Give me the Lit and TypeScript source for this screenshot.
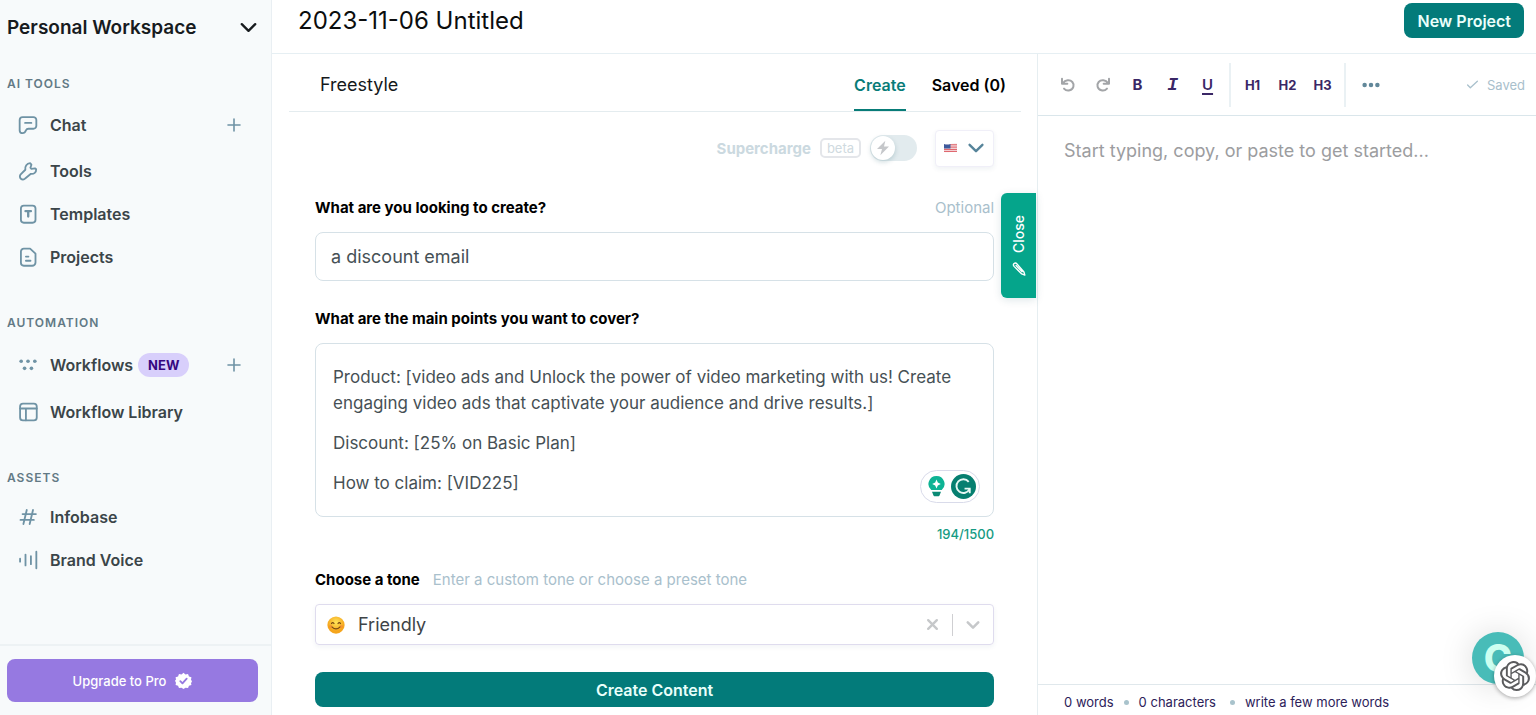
import { LitElement, html, css, svg, nothing, type TemplateResult } from "lit";
import { customElement, property } from "lit/decorators.js";

const ICONS: Record<string, TemplateResult> = {
  chevron: svg`<path d="M5 8.500l7 7 7-7"/>`,
  chat: svg`<path d="M5.500 2.500h13a3.500 3.500 0 0 1 3.500 3.500v7a3.500 3.500 0 0 1-3.500 3.500h-6c-1.600 0-2.400.7-3 2-.8 2-1.900 3.300-3.800 3.300-2.200 0-3.700-1.400-3.700-3.300v-12.500a3.500 3.500 0 0 1 3.500-3.500zM8.500 9.500h7.500"/>`,
  wrench: svg`<path d="M14.500 2.500l1.600 1.900-1.200 3.700 1.200 1.400 4.200-.7 1.500 1.200c.2 3.500-2.600 5.900-6.300 5.400L8.600 21a3.600 3.600 0 0 1-5.400-4.900l5.600-5.600C8 6.300 10.700 2.800 14.500 2.500z"/>`,
  template: svg`<rect x="3.500" y="2" width="17.500" height="20.500" rx="3.500"/><path d="M9 8.500h6.500M12.250 8.500v6.500" stroke-width="2.800"/>`,
  doc: svg`<path d="M7 2h7.500L21 8v10.500a4 4 0 0 1-4 4H7a3.500 3.500 0 0 1-3.500-3.500V5.500A3.500 3.500 0 0 1 7 2zM9.500 11.500h3M9.500 16.500h5.500"/>`,
  dots: svg`<g fill="currentColor" stroke="none"><circle cx="3.800" cy="7.500" r="2.200"/><circle cx="12" cy="7.500" r="2.200"/><circle cx="20.200" cy="7.500" r="2.200"/><circle cx="7.900" cy="16" r="2.200"/><circle cx="16.100" cy="16" r="2.200"/></g>`,
  layout: svg`<rect x="2.500" y="2" width="20" height="20" rx="3.500"/><path d="M2.500 7.800h20M9.500 7.800V22"/>`,
  hash: svg`<path d="M10.500 3.500L6.500 20.500M18 3.500l-4 17M5.500 8.500h16M3 15.500h16"/>`,
  wave: svg`<path d="M2.500 10.500v3.500M9 5.500v13M15.500 7.500v9.500M22 2v20"/>`,
  plus: svg`<path d="M12 3v18M3 12h18"/>`,
  check: svg`<path d="M3 13l5 5L21 6"/>`,
  undo: svg`<path d="M3 2.500v7.500h8M4 9.500C8 4 15 3.500 18.500 7.500c3.500 4 2 11-4 12.500-3.500.8-6.500-.3-8.500-2.500"/>`,
  redo: svg`<path d="M21 2.500v7.500h-8M20 9.500C16 4 9 3.500 5.500 7.500c-3.500 4-2 11 4 12.500 3.500.8 6.500-.3 8.500-2.500"/>`,
  more: svg`<g fill="currentColor" stroke="none"><circle cx="3.500" cy="12" r="3"/><circle cx="12" cy="12" r="3"/><circle cx="20.500" cy="12" r="3"/></g>`,
  close: svg`<path d="M4 4l16 16M20 4L4 20"/>`,
  bolt: svg`<path d="M15.500 1L3 13.500h7.500L8 23 21 9.800h-7.500z" fill="currentColor" stroke="none"/>`,
  pencil: svg`<path d="M3.500 2.500c2-1.500 4-.5 5 .7L20.500 17l1.500 5.500-5.300-2L3.500 7.500C2.300 6 2.300 3.700 3.500 2.500zM7 6l10 10.500"/>`,
};

function icon(name: string, size: number, stroke = 2) {
  return html`<svg width=${size} height=${size} viewBox="0 0 24 24" fill="none" stroke="currentColor"
    stroke-width=${stroke} stroke-linecap="round" stroke-linejoin="round" aria-hidden="true">${ICONS[name]}</svg>`;
}

const base = css`
  * { box-sizing: border-box; }
  svg { display: block; flex: none; }
  button, input, select, textarea { font: inherit; color: inherit; margin: 0; padding: 0; border: 0; background: none; }
  button { cursor: pointer; }
  h1, h2, p, ul { margin: 0; padding: 0; font-size: inherit; font-weight: inherit; }
  ul { list-style: none; }
`;

interface NavItem { label: string; icon: string; badge?: string; add?: boolean; }
interface NavGroup { title: string; items: NavItem[]; }

const NAV: NavGroup[] = [
  { title: "AI TOOLS", items: [
    { label: "Chat", icon: "chat", add: true },
    { label: "Tools", icon: "wrench" },
    { label: "Templates", icon: "template" },
    { label: "Projects", icon: "doc" },
  ] },
  { title: "AUTOMATION", items: [
    { label: "Workflows", icon: "dots", badge: "NEW", add: true },
    { label: "Workflow Library", icon: "layout" },
  ] },
  { title: "ASSETS", items: [
    { label: "Infobase", icon: "hash" },
    { label: "Brand Voice", icon: "wave" },
  ] },
];

@customElement("app-sidebar")
class AppSidebar extends LitElement {
  @property({ attribute: false }) groups: NavGroup[] = NAV;

  static styles = [base, css`
    :host { display: flex; flex-direction: column; background: #f7fafb; border-right: 1px solid #e9eff3; min-height: 0; }
    .workspace { display: flex; align-items: center; justify-content: space-between; height: 54px; padding: 0 11px 0 7px;
      font-size: 19px; font-weight: 600; color: #171b1e; text-align: left; }
    .nav { flex: 1; min-height: 0; overflow: hidden; display: flex; flex-direction: column; gap: 35px; padding-top: 20px; }
    .group { display: flex; flex-direction: column; gap: 7px; }
    .heading { padding-left: 7px; font-size: 12px; line-height: 20px; font-weight: 600; letter-spacing: 1px; color: #627985; }
    .row { display: flex; align-items: center; height: 43px; padding: 0 29px 0 18px; }
    .row.action { height: 48px; }
    .row.badged { height: 50px; }
    .link { display: flex; align-items: center; gap: 12px; flex: 1; font-size: 16px; font-weight: 600; color: #3b4549; text-decoration: none; }
    .link svg, .add { color: #6f93a5; }
    .badge { margin-left: -7px; padding: 0 10px; border-radius: 12px; background: #d8cffb; color: #36077f; font-size: 13px; line-height: 24px; font-weight: 700; }
    .foot { border-top: 2px solid #edf2f4; padding: 13px 13px 13px 7px; }
    .upgrade { display: flex; align-items: center; justify-content: center; gap: 9px; width: 100%; height: 43px; border-radius: 8px;
      background: #9679e1; color: #fff; font-size: 13px; font-weight: 500; }
  `];

  render() {
    return html`
      <button class="workspace">Personal Workspace ${icon("chevron", 23, 2.4)}</button>
      <nav class="nav">
        ${this.groups.map((g) => html`
          <section class="group">
            <h2 class="heading">${g.title}</h2>
            <ul>
              ${g.items.map((i) => html`
                <li class="row ${i.badge ? "badged" : i.add ? "action" : ""}">
                  <a class="link" href="#">${icon(i.icon, 20, 2.2)}<span>${i.label}</span>
                    ${i.badge ? html`<span class="badge">${i.badge}</span>` : nothing}</a>
                  ${i.add ? html`<button class="add" aria-label="Add to ${i.label}">${icon("plus", 16, 2.4)}</button>` : nothing}
                </li>`)}
            </ul>
          </section>`)}
      </nav>
      <div class="foot">
        <button class="upgrade">Upgrade to Pro
          <svg width="17" height="17" viewBox="0 0 24 24" aria-hidden="true">
            <path fill="#fff" d="M12 1l2.800 2.400 3.600-.6 1.300 3.400 3.500 1.300-.6 3.600L24 13l-1.400 3 .6 2.200-3.500 1.300-1.300 3.200-3.600-.3L12 24l-2.800-1.600-3.600.3-1.300-3.200-3.500-1.300.6-3.200L0 12.500l1.400-1.800-.6-3.200 3.500-1.300 1.300-3.400 3.600.6z"/>
            <path fill="none" stroke="#9679e1" stroke-width="2.600" stroke-linecap="round" stroke-linejoin="round" d="M7.500 13l3 3 6-6.500"/>
          </svg>
        </button>
      </div>`;
  }
}

@customElement("content-form")
class ContentForm extends LitElement {
  static styles = [base, css`
    :host { display: block; position: relative; min-width: 0; border-right: 1px solid #e6eef1; }
    .tabs { display: flex; align-items: stretch; gap: 26px; height: 58px; margin: 0 16px 0 17px; padding: 0 15px 0 31px;
      border-bottom: 1px solid #e4ecef; font-size: 16px; }
    .name { flex: 1; align-self: center; font-size: 18px; color: #15191b; padding-top: 4px; }
    .tab { display: flex; align-items: center; padding-top: 6px; border-bottom: 2px solid transparent; font-weight: 600; color: #000; }
    .tab.on { color: #087c78; border-color: #087c78; }
    .form { padding: 18px 43px 0; display: flex; flex-direction: column; }
    .options { display: flex; align-items: center; justify-content: flex-end; height: 36px; gap: 9px; margin-bottom: 30px; }
    .super { font-size: 15px; font-weight: 700; color: #cbd9e0; }
    .beta { padding: 0 5px; border: 2px solid #e4e6ea; border-radius: 5px; font-size: 13px; line-height: 16px; color: #cfdae0; }
    .switch { position: relative; display: block; width: 47px; height: 26px; }
    .switch input { appearance: none; display: block; width: 47px; height: 26px; border-radius: 13px; background: #e2ebee; }
    .knob { position: absolute; left: 1px; top: 1px; width: 24px; height: 24px; border-radius: 50%; background: #fff; color: #c5c7ca;
      display: grid; place-items: center; box-shadow: 0 2px 5px #0a4a5a33; pointer-events: none; }
    .lang { position: relative; display: flex; align-items: center; gap: 8px; width: 59px; height: 37px; margin-left: 9px; padding: 0 8px;
      border: 1px solid #f0eff8; border-radius: 4px; background: #fff; box-shadow: 0 2px 5px #22406012; color: #56849a; }
    .lang select { position: absolute; inset: 0; width: 100%; opacity: 0; }
    .label { display: flex; justify-content: space-between; margin-bottom: 12px; font-size: 15px; line-height: 24px; font-weight: 700; color: #000; }
    .hint { font-size: 15px; font-weight: 400; color: #a9c0cc; }
    .input { width: 100%; height: 49px; margin-bottom: 26px; padding: 0 15px; border: 1px solid #d6e1e7; border-radius: 8px; font-size: 18px; color: #465055; background: #fff; }
    .points { position: relative; border: 1px solid #d6e1e7; border-radius: 8px; }
    .rich { padding: 20px 17px; display: flex; flex-direction: column; gap: 14px; font-size: 17px; line-height: 26px; color: #465055; outline: none; }
    .assist { position: absolute; right: 13px; bottom: 13px; display: flex; align-items: center; gap: 6px; height: 33px; padding: 0 3px 0 7px;
      border: 1px solid #d9dbea; border-radius: 17px; background: #fff; }
    .count { margin: 6px 0 23px; text-align: right; font-size: 13px; line-height: 22px; font-weight: 500; color: #159b83; }
    .label.tone-label { justify-content: flex-start; gap: 13px; }
    .tone { display: flex; align-items: center; height: 41px; margin-bottom: 27px; padding: 0 11px; border: 1px solid #dfdcee; border-radius: 4px;
      box-shadow: 0 2px 5px #2240600f; color: #c6c8ca; }
    .tone select { appearance: none; flex: 1; min-width: 0; margin-left: 13px; font-size: 18px; color: #3e4447; }
    .tone .bar { width: 1px; height: 22px; margin: 0 11px 0 13px; background: #cfcfd2; }
    .submit { height: 35px; border-radius: 8px; background: #037b7a; color: #e9fffb; font-size: 16px; font-weight: 600; }
    .drawer { position: absolute; top: 139px; right: 1px; width: 35px; height: 105px; display: flex; align-items: center; justify-content: center; gap: 8px;
      flex-direction: column; border-radius: 6px 0 0 6px; background: #05a58b; color: #fff; font-size: 14px; font-weight: 500; box-shadow: 0 2px 8px #0a4a5a22; }
    .drawer span { writing-mode: vertical-rl; rotate: 180deg; line-height: 20px; }
  `];

  render() {
    return html`
      <div class="tabs" role="tablist">
        <div class="name">Freestyle</div>
        <button class="tab on" role="tab" aria-selected="true">Create</button>
        <button class="tab" role="tab" aria-selected="false">Saved (0)</button>
      </div>
      <form class="form" @submit=${(e: Event) => e.preventDefault()}>
        <div class="options">
          <label class="super" for="super">Supercharge</label>
          <span class="beta">beta</span>
          <span class="switch"><input id="super" type="checkbox" role="switch" /><span class="knob">${icon("bolt", 16)}</span></span>
          <span class="lang">
            <svg width="13" height="10" viewBox="0 0 13 10" aria-hidden="true">
              <path fill="#f5dfe2" d="M0 1q3 1 6.500 0T13 .6v8q-3-.5-6.500.3T0 9z"/>
              <path stroke="#dd5a62" d="M6 1.800h7M6 4.100h7M0 6.400h13M0 8.400h13"/>
              <path fill="#3d5a9c" d="M0 1q3 1 6.500 0v4.600H0z"/>
            </svg>
            ${icon("chevron", 22, 2.6)}
            <select aria-label="Language"><option>English</option></select>
          </span>
        </div>

        <label class="label" for="topic">What are you looking to create? <span class="hint">Optional</span></label>
        <input class="input" id="topic" type="text" value="a discount email" />

        <div class="label" id="points-label">What are the main points you want to cover?</div>
        <div class="points">
          <div class="rich" contenteditable="true" role="textbox" aria-multiline="true" aria-labelledby="points-label" spellcheck="false">
            <p>Product: [video ads and Unlock the power of video marketing with us! Create engaging video ads that captivate your audience and drive results.]</p>
            <p>Discount: [25% on Basic Plan]</p>
            <p>How to claim: [VID225]</p>
          </div>
          <div class="assist">
            <svg width="17" height="21" viewBox="0 0 17 21" aria-hidden="true">
              <path fill="#0eb394" d="M8.500 0a8 8 0 0 1 5.200 14.100H3.300A8 8 0 0 1 8.500 0z"/>
              <path fill="#fff" d="M8.500 3.500l1.300 3 3 1.500-3 1.500-1.300 3-1.300-3-3-1.500 3-1.500z"/>
              <path fill="#0b8b76" d="M4 15.700h9l-1.500 3.800a1 1 0 0 1-1 .7h-4a1 1 0 0 1-1-.7z"/>
            </svg>
            <svg width="25" height="25" viewBox="0 0 24 24" aria-hidden="true">
              <circle cx="12" cy="12" r="12" fill="#067f70"/>
              <path fill="none" stroke="#e6f8f4" stroke-width="1.800" d="M17 7.500A6.600 6.600 0 1 0 17.800 14.500"/>
              <path fill="none" stroke="#e6f8f4" stroke-width="1.800" d="M13 14h5v4.500"/>
            </svg>
          </div>
        </div>
        <div class="count">194/1500</div>

        <label class="label tone-label" for="tone">Choose a tone <span class="hint">Enter a custom tone or choose a preset tone</span></label>
        <div class="tone">
          <svg width="18" height="18" viewBox="0 0 24 24" aria-hidden="true">
            <defs><radialGradient id="face" cx=".5" cy=".35"><stop offset="0" stop-color="#ffe65a"/><stop offset="1" stop-color="#f5a51c"/></radialGradient></defs>
            <circle cx="12" cy="12" r="11.500" fill="url(#face)"/>
            <path fill="none" stroke="#7a4a12" stroke-width="1.600" stroke-linecap="round" d="M6 10q1.500-2.500 3.300 0M14.700 10q1.800-2.500 3.300 0M6.500 14.500q5.500 5.500 11 0"/>
            <circle cx="4.800" cy="14" r="2.200" fill="#f4733a" opacity=".4"/><circle cx="19.200" cy="14" r="2.200" fill="#f4733a" opacity=".4"/>
          </svg>
          <select id="tone"><option>Friendly</option></select>
          <button type="button" aria-label="Clear tone">${icon("close", 13, 4.4)}</button>
          <span class="bar"></span>
          ${icon("chevron", 18, 3.4)}
        </div>
        <button class="submit">Create Content</button>
      </form>
      <button class="drawer"><span>Close</span>${icon("pencil", 14, 2.4)}</button>`;
  }
}

@customElement("doc-editor")
class DocEditor extends LitElement {
  static styles = [base, css`
    :host { display: flex; flex-direction: column; min-width: 0; min-height: 0; }
    .bar { display: flex; align-items: center; height: 62px; padding: 0 11px 0 12px; border-bottom: 1px solid #dae6eb; color: #3a2766; }
    .tool { display: grid; place-items: center; width: 35px; height: 35px; font-size: 15px; font-weight: 700; }
    .mute { color: #a3a5a8; }
    .italic { font-family: "Liberation Mono", monospace; font-style: italic; font-size: 18px; }
    .under { text-decoration: underline; text-underline-offset: 3px; text-decoration-thickness: 2px; font-weight: 600; }
    .head { font-size: 14px; }
    .head span { font-size: 13px; }
    .set { display: flex; align-items: center; height: 44px; padding: 0 4px; border-right: 2px solid #eaf1f4; }
    .set:first-child { padding-left: 0; }
    .dots { width: 50px; color: #62889a; }
    .saved { display: flex; align-items: center; gap: 8px; margin-left: auto; font-size: 13px; color: #a9c0cc; }
    .text { flex: 1; min-height: 0; width: 100%; padding: 20px 26px; resize: none; outline: none; font-size: 18px; line-height: 30px; color: #333; }
    .text::placeholder { color: #9c9d9f; opacity: 1; }
    .status { display: flex; align-items: center; gap: 10px; padding: 7px 26px 3px; border-top: 1px solid #e0e8ec; font-size: 13px; line-height: 20px; color: #2c2159; }
    .dot { width: 5px; height: 5px; border-radius: 50%; background: #a9c3cc; }
    .count { padding-right: 4px; }
  `];

  render() {
    return html`
      <div class="bar" role="toolbar">
        <div class="set">
          <button class="tool mute" aria-label="Undo">${icon("undo", 16, 3)}</button>
          <button class="tool mute" aria-label="Redo">${icon("redo", 16, 3)}</button>
          <button class="tool">B</button>
          <button class="tool italic">I</button>
          <button class="tool under">U</button>
        </div>
        <div class="set">
          ${[1, 2, 3].map((n) => html`<button class="tool head"><span>H${n}</span></button>`)}
        </div>
        <button class="tool dots" aria-label="More">${icon("more", 18)}</button>
        <span class="saved">${icon("check", 13, 2.4)} Saved</span>
      </div>
      <textarea class="text" aria-label="Document" placeholder="Start typing, copy, or paste to get started..."></textarea>
      <div class="status">
        <span>0 words</span><span class="dot"></span>
        <span class="count">0 characters</span><span class="dot"></span>
        <span>write a few more words</span>
      </div>`;
  }
}

@customElement("app-root")
class AppRoot extends LitElement {
  static styles = [base, css`
    :host { display: grid; grid-template-columns: 272px minmax(0, 1fr); grid-template-rows: minmax(0, 1fr); position: relative; height: 100vh; overflow: hidden; background: #fff;
      font-family: Inter, "Liberation Sans", sans-serif; }
    .main { display: flex; flex-direction: column; min-width: 0; min-height: 0; }
    .head { display: flex; align-items: center; justify-content: space-between; padding: 3px 12px 15px 26px; border-bottom: 1px solid #e6eff3; }
    .title { font-size: 24px; line-height: 35px; color: #0b0d0e; }
    .new { height: 35px; padding: 0 13px; border-radius: 8px; background: #037b7a; color: #eafffb; font-size: 16px; font-weight: 600; }
    .panes { flex: 1; min-height: 0; display: grid; grid-template-columns: 20fr 13fr; grid-template-rows: minmax(0, 1fr); }
    .help { position: absolute; right: 12px; bottom: 31px; width: 52px; height: 52px; border-radius: 50%; background: #48bcb8; color: #ccfff0;
      font-size: 38px; line-height: 52px; font-weight: 800; box-shadow: 0 2px 34px #00000026; }
    .gpt { position: absolute; right: 0; bottom: 18px; display: grid; place-items: center; width: 42px; height: 42px; border-radius: 50%; background: #fff; box-shadow: 0 1px 4px #00000055; }
  `];

  render() {
    return html`
      <app-sidebar></app-sidebar>
      <main class="main">
        <header class="head">
          <h1 class="title">2023-11-06 Untitled</h1>
          <button class="new">New Project</button>
        </header>
        <div class="panes">
          <content-form></content-form>
          <doc-editor></doc-editor>
        </div>
      </main>
      <button class="help" aria-label="Help">C</button>
      <button class="gpt" aria-label="Assistant">
        <svg width="30" height="30" viewBox="0 0 24 24" fill="#5b5c5e" aria-hidden="true"><path d="M22.2819 9.8211a5.9847 5.9847 0 0 0-.5157-4.9108 6.0462 6.0462 0 0 0-6.5098-2.9A6.0651 6.0651 0 0 0 4.9807 4.1818a5.9847 5.9847 0 0 0-3.9977 2.9 6.0462 6.0462 0 0 0 .7427 7.0966 5.98 5.98 0 0 0 .511 4.9107 6.051 6.051 0 0 0 6.5146 2.9001A5.9847 5.9847 0 0 0 13.2599 24a6.0557 6.0557 0 0 0 5.7718-4.2058 5.9894 5.9894 0 0 0 3.9977-2.9001 6.0557 6.0557 0 0 0-.7475-7.0729zm-9.022 12.6081a4.4755 4.4755 0 0 1-2.8764-1.0408l.1419-.0804 4.7783-2.7582a.7948.7948 0 0 0 .3927-.6813v-6.7369l2.02 1.1686a.071.071 0 0 1 .038.052v5.5826a4.504 4.504 0 0 1-4.4945 4.4944zm-9.6607-4.1254a4.4708 4.4708 0 0 1-.5346-3.0137l.142.0852 4.783 2.7582a.7712.7712 0 0 0 .7806 0l5.8428-3.3685v2.3324a.0804.0804 0 0 1-.0332.0615L9.74 19.9502a4.4992 4.4992 0 0 1-6.1408-1.6464zM2.3408 7.8956a4.485 4.485 0 0 1 2.3655-1.9728V11.6a.7664.7664 0 0 0 .3879.6765l5.8144 3.3543-2.0201 1.1685a.0757.0757 0 0 1-.071 0l-4.8303-2.7865A4.504 4.504 0 0 1 2.3408 7.872zm16.5963 3.8558L13.1038 8.364 15.1192 7.2a.0757.0757 0 0 1 .071 0l4.8303 2.7913a4.4944 4.4944 0 0 1-.6765 8.1042v-5.6772a.79.79 0 0 0-.407-.667zm2.0107-3.0231l-.142-.0852-4.7735-2.7818a.7759.7759 0 0 0-.7854 0L9.409 9.2297V6.8974a.0662.0662 0 0 1 .0284-.0615l4.8303-2.7866a4.4992 4.4992 0 0 1 6.6802 4.66zM8.3065 12.863l-2.02-1.1638a.0804.0804 0 0 1-.038-.0567V6.0742a4.4992 4.4992 0 0 1 7.3757-3.4537l-.142.0805L8.704 5.459a.7948.7948 0 0 0-.3927.6813zm1.0976-2.3654l2.602-1.4998 2.6069 1.4998v2.9994l-2.5974 1.4997-2.6067-1.4997Z"/></svg>
      </button>`;
  }
}
